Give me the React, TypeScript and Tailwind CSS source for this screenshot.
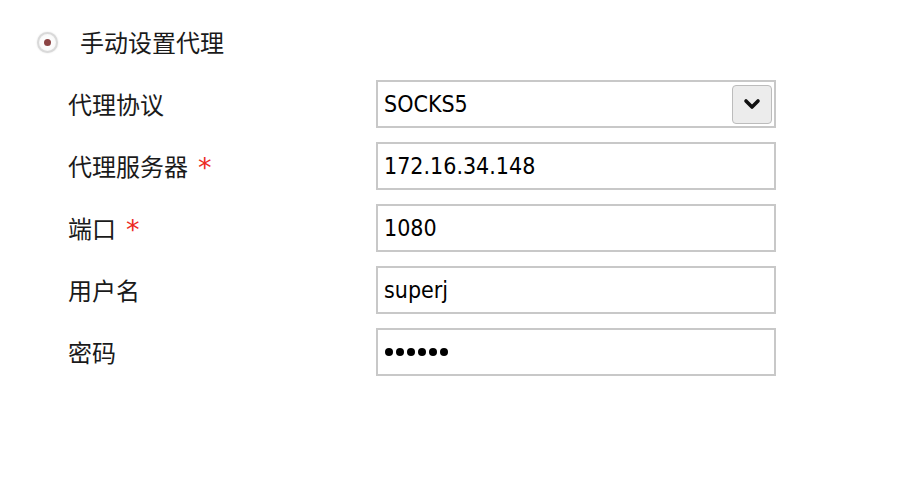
import React from "react";

const latin = 'font-["DejaVu_Sans","Noto_Sans_CJK_SC",sans-serif] [font-stretch:condensed]';
const cjk = 'font-["Noto_Sans_CJK_SC",sans-serif]';

function Label({ text, required }: { text: string; required?: boolean }) {
  return (
    <div className="flex items-center pl-[68px] h-[48px]">
      <span className={`${cjk} text-[24px] text-[#1a1a1a] leading-none`}>{text}</span>
      {required && (
        <span className={`font-["DejaVu_Sans",sans-serif] text-[27px] text-[#ec2a24] leading-none ml-[10px] mt-[2px]`}>*</span>
      )}
    </div>
  );
}

function Box({ children }: { children: React.ReactNode }) {
  return (
    <div className="w-[400px] h-[48px] border-2 border-[#c8c8c8] bg-white flex items-center pl-[6px]">
      {children}
    </div>
  );
}

export default function App() {
  return (
    <div className="w-[924px] h-[480px] bg-white pt-[18px]">
      <div className="flex items-center h-[48px] pl-[37px]">
        <div className="w-[21px] h-[21px] rounded-full bg-[#d9d9d9] flex items-center justify-center shadow-[0_0_2px_rgba(0,0,0,0.12)]">
          <div className="w-[17px] h-[17px] rounded-full bg-[radial-gradient(circle,#ffffff_0%,#fbfbfb_55%,#ececec_100%)] flex items-center justify-center">
            <div className="w-[7px] h-[7px] rounded-full bg-[#8c4444]" />
          </div>
        </div>
        <span className={`${cjk} text-[24px] text-[#1a1a1a] leading-none ml-[22px]`}>手动设置代理</span>
      </div>
      <div className="mt-[14px] grid grid-cols-[376px_400px] gap-y-[14px]">
        <Label text="代理协议" />
        <Box>
          <span className={`${latin} text-[23px] text-black leading-none flex-1`}>SOCKS5</span>
          <div className="w-[40px] h-[39px] mr-[2px] border border-[#bcbcbc] rounded-[4px] bg-[#ececec] flex items-center justify-center">
            <svg width="18" height="12" viewBox="0 0 18 12">
              <path d="M3 3 L9 9 L15 3" fill="none" stroke="#111" strokeWidth="3.6" strokeLinecap="round" strokeLinejoin="round" />
            </svg>
          </div>
        </Box>
        <Label text="代理服务器" required />
        <Box>
          <span className={`${latin} text-[23px] text-black leading-none`}>172.16.34.148</span>
        </Box>
        <Label text="端口" required />
        <Box>
          <span className={`${latin} text-[23px] text-black leading-none`}>1080</span>
        </Box>
        <Label text="用户名" />
        <Box>
          <span className={`${latin} text-[23px] text-black leading-none`}>superj</span>
        </Box>
        <Label text="密码" />
        <Box>
          <div className="flex gap-[3px] ml-[1px]">
            {[0, 1, 2, 3, 4, 5].map((i) => (
              <div key={i} className="w-[8px] h-[8px] rounded-full bg-black" />
            ))}
          </div>
        </Box>
      </div>
    </div>
  );
}
